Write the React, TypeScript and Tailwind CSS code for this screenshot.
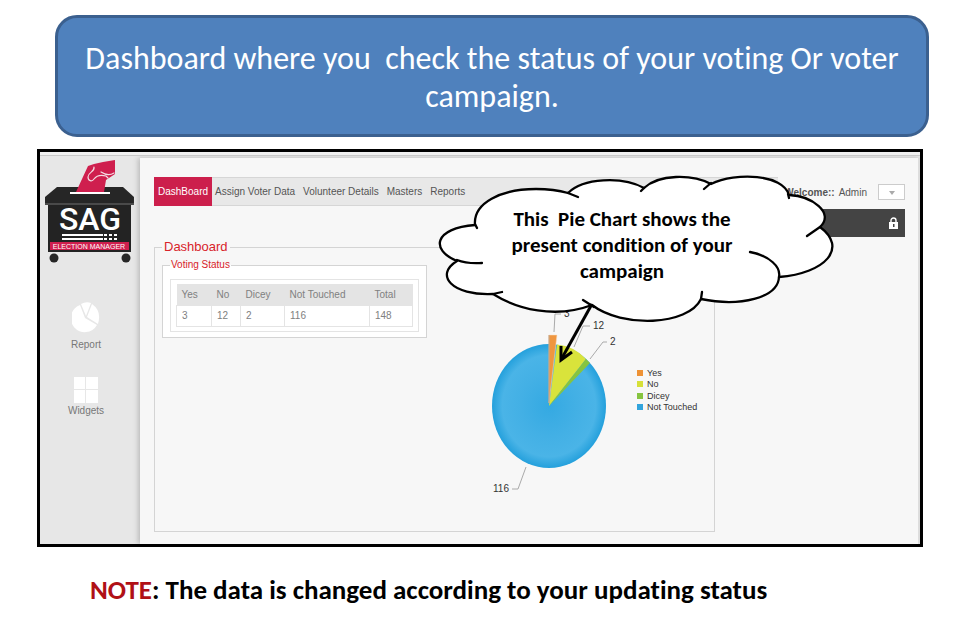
import React from "react";

const navItems = ["Assign Voter Data", "Volunteer Details", "Masters", "Reports"];

const votes = [
  { label: "Yes", value: 3, width: "w-[35px]" },
  { label: "No", value: 12, width: "w-[29px]" },
  { label: "Dicey", value: 2, width: "w-[44px]" },
  { label: "Not Touched", value: 116, width: "w-[85px]" },
  { label: "Total", value: 148, width: "w-[43px]" },
];

function Logo() {
  return (
    <svg viewBox="0 0 90 104" className="ml-2 h-[104px] w-[90px]" role="img" aria-label="SAG Election Manager">
      <path d="M12 27h66l11 10v7H0v-7z" fill="#262626" />
      <path d="M0 43h89v2H0z" fill="#4a4a4a" />
      <path d="M3 45h83v47H3z" fill="#232323" />
      <path d="M25 32h40v2H25z" fill="#fff" />
      <path d="M31 32 43 6l6-2 9-2L70 0v14l-6 4-3 2-2 12z" fill="#cf1f4e" />
      <path d="M49 7c1 5-6 5-6 10 0 4 4 5 6 2 3-4 8-4 12-3l2 2M56 12c3 2 8 4 13 1" fill="none" stroke="#f3dbe2" strokeWidth="1.200" strokeLinecap="round" />
      <text x="45" y="70" textAnchor="middle" fontSize="32" fontWeight="500" fill="#fff" className="font-['Roboto','Liberation_Sans',sans-serif]">SAG</text>
      <path d="M17 74h41v2H17zM17 78h41v2H17z" fill="#fff" />
      <path d="M59 75h14M59 79h14" stroke="#fff" strokeWidth="2" strokeDasharray="3 2" />
      <path d="M5 82h79v8H5z" fill="#cf1f4e" />
      <text x="44" y="89" textAnchor="middle" fontSize="7" fill="#fff">ELECTION MANAGER</text>
      <circle cx="9" cy="98" r="4.500" fill="#262626" />
      <circle cx="81" cy="98" r="4.500" fill="#262626" />
    </svg>
  );
}

function Sidebar() {
  return (
    <aside className="flex w-[100px] shrink-0 flex-col items-center bg-[#e7e7e7] pt-1 pr-2">
      <Logo />
      <a href="#report" className="mt-[37px] flex flex-col items-center gap-1 text-[#777]">
        <svg viewBox="-1 0 28 32" className="h-8 w-7" fill="#fff">
          <path d="M12 17 7 4A14 14 0 1 0 24 24z" />
          <path d="M13 15 8 3q5-3 10-1z" />
          <path d="M14 16 19 3q10 7 6 20z" />
        </svg>
        <span className="text-[10px] leading-4">Report</span>
      </a>
      <a href="#widgets" className="mt-6 flex flex-col items-center text-[#777]">
        <svg viewBox="0 0 24 26" className="h-[26px] w-6" fill="#fff">
          <path d="M0 0h11v12H0zM12 0h12v12H12zM0 13h11v13H0zM12 13h12v13H12z" />
        </svg>
        <span className="text-[10px] leading-4">Widgets</span>
      </a>
    </aside>
  );
}

function TopBar() {
  return (
    <header className="flex items-start">
      <nav className="flex h-[29px] flex-1 items-stretch gap-2 border-y border-[#d6d6d6] bg-[#e8e8e8] text-[10px] text-[#555]">
        <a href="#dashboard" className="-my-px -mr-[5px] flex items-center bg-[#cc1f4c] px-1 text-white">DashBoard</a>
        {navItems.map((item) => (
          <a key={item} href="#nav" className="flex items-center">{item}</a>
        ))}
      </nav>
      <div className="w-[127px] shrink-0">
        <div className="flex h-8 items-center justify-end pb-[2px] text-[10px] text-[#555]">
          <b>Welcome::</b>
          <span className="ml-1">Admin</span>
          <div className="relative ml-[11px] h-4 w-[27px]">
            <select aria-label="Account menu" className="block h-full w-full appearance-none border border-[#ccc] bg-white">
              <option></option>
            </select>
            <svg viewBox="0 0 6 4" className="pointer-events-none absolute top-[7px] left-[11px] h-1 w-[6px]"><path d="M0 0h6L3 4z" fill="#aaa" /></svg>
          </div>
        </div>
        <div className="flex h-7 items-center justify-end bg-[#444] pr-[7px]">
          <button aria-label="Log out">
            <svg viewBox="0 0 9 12" className="block h-3 w-[9px]">
              <path d="M2 6V3.500a2.500 2.500 0 0 1 5 0V6" fill="none" stroke="#fff" strokeWidth="1.400" />
              <path d="M0 5h9v7H0z" fill="#fff" />
              <path d="M4 7h1.500v3H4z" fill="#444" />
            </svg>
          </button>
        </div>
      </div>
    </header>
  );
}

function VotingStatus() {
  return (
    <fieldset className="h-[79px] w-[264px] shrink-0 border border-[#d4d4d4] bg-white px-[7px]">
      <legend className="px-px text-[10px] leading-3 text-[#d8232a]">Voting Status</legend>
      <div className="mt-2 border border-[#e4e4e4] px-[5px] py-1">
        <table className="w-full table-fixed border-collapse text-[10px] text-[#808080]">
          <thead>
            <tr className="h-[21px] bg-[#e4e4e4]">
              {votes.map((v) => (
                <th key={v.label} scope="col" className={`${v.width} p-0 pl-[5px] text-left font-normal whitespace-nowrap`}>{v.label}</th>
              ))}
            </tr>
          </thead>
          <tbody>
            <tr className="h-[21px]">
              {votes.map((v) => (
                <td key={v.label} className="border border-[#e4e4e4] p-0 pl-[5px]">{v.value}</td>
              ))}
            </tr>
          </tbody>
        </table>
      </div>
    </fieldset>
  );
}

function PieChart() {
  const legend = [
    { label: "Yes", color: "#ee9235" },
    { label: "No", color: "#d6e039" },
    { label: "Dicey", color: "#86c440" },
    { label: "Not Touched", color: "#32a4dc" },
  ];
  return (
    <svg viewBox="480 300 225 200" className="mt-[45px] h-[200px] w-[225px] shrink-0" role="img" aria-label="Voting status pie chart">
      <defs>
        <radialGradient id="blue">
          <stop offset="0" stopColor="#34a9e2" />
          <stop offset="0.500" stopColor="#43b0e5" />
          <stop offset="0.820" stopColor="#4ab4e7" />
          <stop offset="1" stopColor="#24a0dc" />
        </radialGradient>
      </defs>
      <ellipse cx="549" cy="406" rx="57" ry="62" fill="url(#blue)" />
      <path d="M549 406 557 344.500Q574 346 586 359z" fill="#d9e33b" />
      <path d="M549 406 586 359 590 363z" fill="#86c440" />
      <path d="M549 403V335h8z" fill="#ef9640" stroke="#f7ddc0" strokeWidth="0.500" />
      <path d="M549 403V335" stroke="#c09a78" />
      <g fill="none" stroke="#aaa" strokeWidth="1">
        <path d="M554 332 555 314h6M574 347 583 326h7M590 359 603 342h4M526 467 518 489h-6" />
      </g>
      <g fontSize="10" fill="#333">
        <text x="564" y="317">3</text>
        <text x="593" y="329">12</text>
        <text x="610" y="345">2</text>
        <text x="493" y="492">116</text>
      </g>
      <g fontSize="9" fill="#333">
        {legend.map((item, i) => (
          <g key={item.label}>
            <rect x="637" y={370 + Math.round(i * 11.4)} width="6" height="6" fill={item.color} />
            <text x="647" y={376 + Math.round(i * 11.4)}>{item.label}</text>
          </g>
        ))}
      </g>
    </svg>
  );
}

function CloudCallout() {
  return (
    <div className="absolute top-[23px] left-[396px] h-[190px] w-[400px]">
      <svg viewBox="436 175 400 190" className="absolute inset-0 h-full w-full" aria-hidden="true">
        <path d="M475 225C473 203 501 189 536 189Q554 189 568 193C583 178 622 176 644 188C659 174 692 174 711 184C736 172 783 174 789 195C812 196 835 213 820 227C848 248 826 273 779 277C778 298 740 307 701 299C688 326 622 328 592 305C555 319 517 309 493 294C452 296 434 275 457 261C430 250 434 228 475 225Z" fill="#fff" stroke="#000" strokeWidth="2.300" strokeLinejoin="round" />
        <path d="M475 224l2 4M568 193l10 4M644 188l-3 3M711 183l-7 6M788 194l1 4M820 227l-13 9M779 277C781 267 770 256 750 252M701 299l1-7M594 307l-11-7M493 294l9-2M457 260Q467 264 482 263" fill="none" stroke="#000" strokeWidth="2.300" strokeLinecap="round" />
        <path d="M592 304 562 358" stroke="#000" strokeWidth="3" />
        <path d="M561 346v14l11-8" fill="none" stroke="#000" strokeWidth="3" />
      </svg>
      <p className="relative pt-[31px] pr-[28px] text-center font-['Carlito','Lato',sans-serif] text-[21px] leading-[26px] font-bold whitespace-pre text-black [font-variant-ligatures:none]">
        {"This  Pie Chart shows the\npresent condition of your\ncampaign"}
      </p>
    </div>
  );
}

export default function App() {
  return (
    <main className="bg-white pt-[15px] pb-4 font-['Liberation_Sans',Arial,sans-serif]">
      <h1 className="mr-[31px] ml-[55px] rounded-[22px] border-[3px] border-[#3b608f] bg-[#4f81bd] px-6 pt-[22px] pb-[18px] text-center font-['Carlito','Lato',sans-serif] text-[32px] leading-[38px] whitespace-pre-wrap text-white [font-variant-ligatures:none]">
        {"Dashboard where you  check the status of your voting Or voter campaign."}
      </h1>

      <section className="relative mt-3 mr-[37px] ml-[37px] border-[3px] border-black bg-[#e7e7e7]">
        <div className="h-[3px] bg-[#f0f0f0]" />
        <div className="flex overflow-hidden border-t border-[#c8c8c8]">
          <Sidebar />
          <div className="mt-[2px] min-w-0 flex-1 border-r-2 border-[#ddd] bg-[#f7f7f7] pt-[19px] pr-[13px] pb-3 pl-[14px] shadow-[-2px_0_5px_#bbb]">
            <TopBar />
            <fieldset className="mt-[2px] flex h-[293px] w-[561px] justify-between border border-[#d4d4d4] pr-[9px] pl-[7px]">
              <legend className="px-[2px] text-[13px] leading-4 text-[#d8232a]">Dashboard</legend>
              <div className="mt-1"><VotingStatus /></div>
              <PieChart />
            </fieldset>
          </div>
        </div>
        <CloudCallout />
      </section>

      <p className="mt-6 ml-[90px] font-['Carlito','Lato',sans-serif] text-[27px] leading-[38px] font-bold text-black [font-variant-ligatures:none]">
        <span className="text-[#b01116]">NOTE</span>: The data is changed according to your updating status
      </p>
    </main>
  );
}
